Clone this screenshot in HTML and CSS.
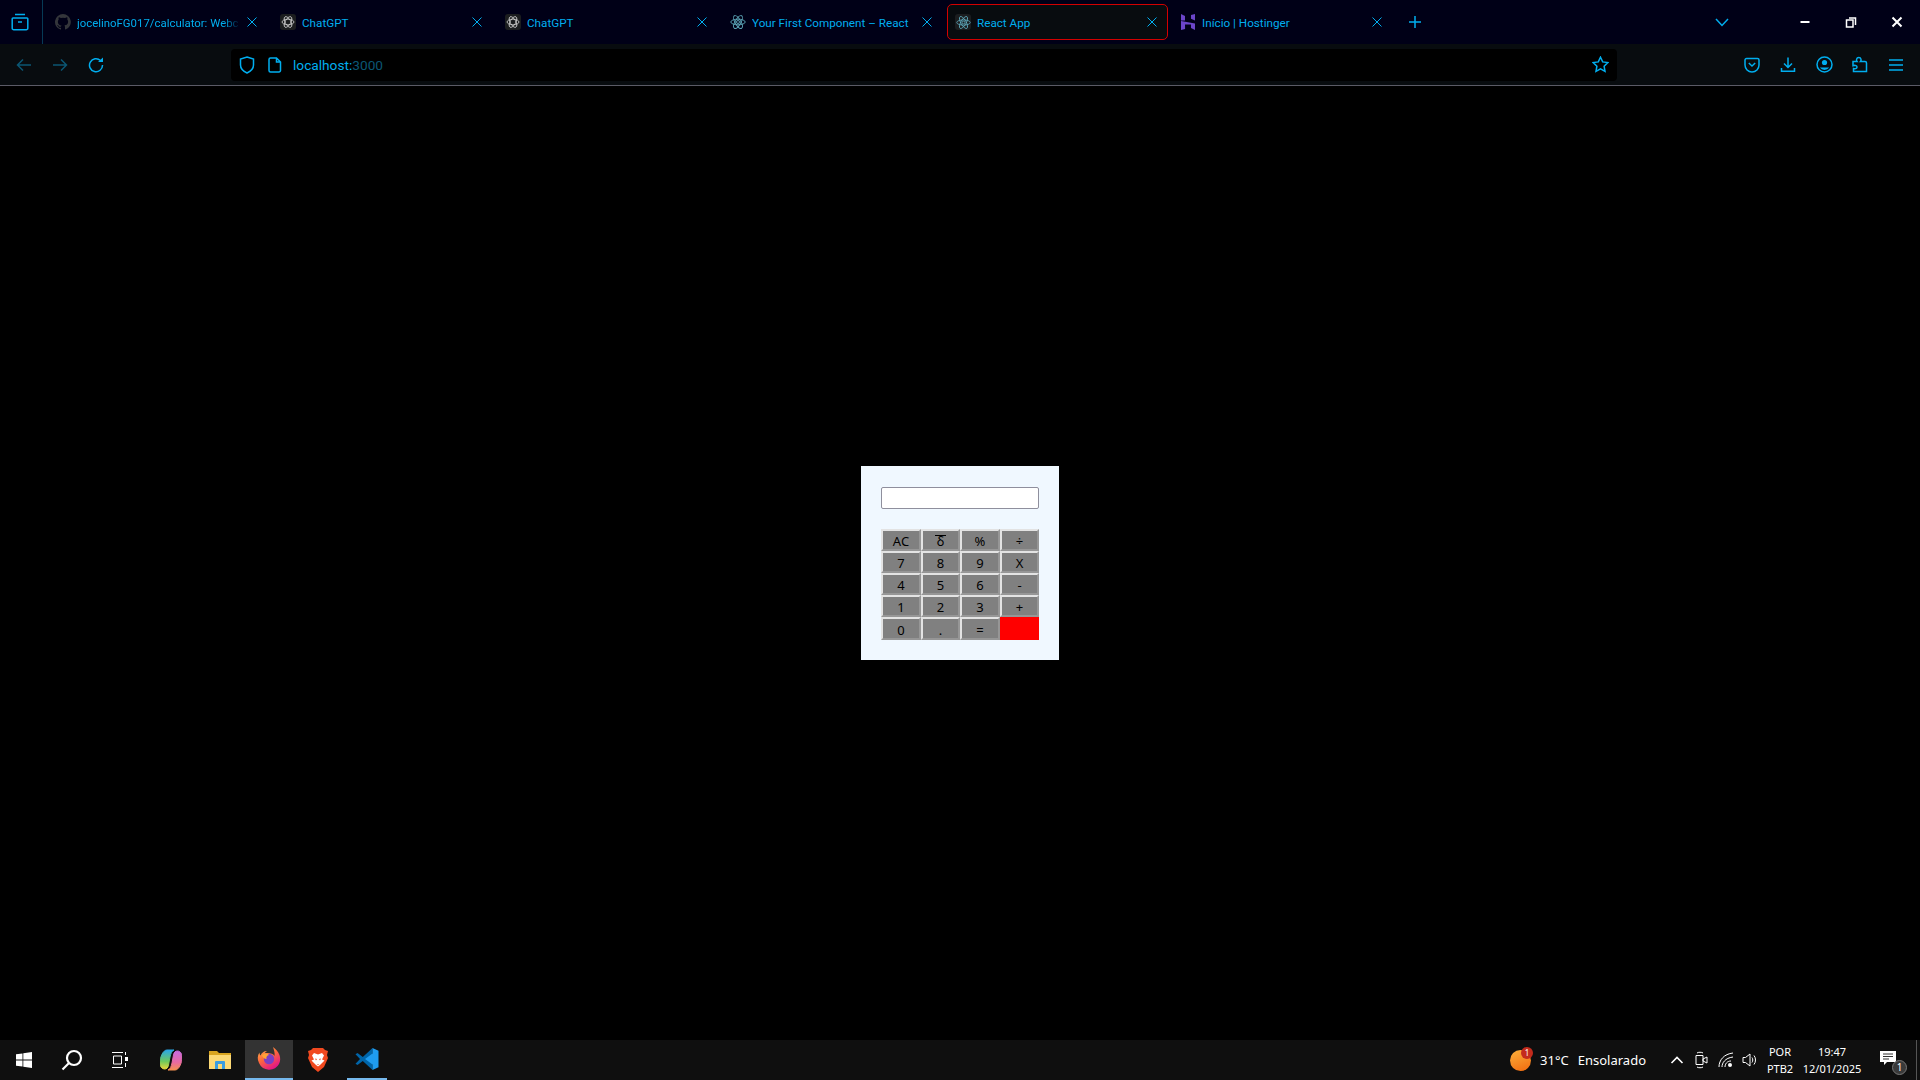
FILE: index.html
```html
<!DOCTYPE html>
<html lang="en">
<head>
    <meta charset="UTF-8">
    <meta name="viewport" content="width=device-width, initial-scale=1.0">
    <title>React App</title>
    <link rel="stylesheet" href="styles.css">
</head>
<body>
    <svg class="defs" width="0" height="0">
        <defs>
            <symbol id="ico-close" viewBox="0 0 12 12"><path d="M1.5 1.5l9 9M10.5 1.5l-9 9"/></symbol>
            <symbol id="ico-react" viewBox="0 0 16 16">
                <ellipse cx="8" cy="8" rx="7.2" ry="2.8"/>
                <ellipse cx="8" cy="8" rx="7.2" ry="2.8" transform="rotate(60 8 8)"/>
                <ellipse cx="8" cy="8" rx="7.2" ry="2.8" transform="rotate(120 8 8)"/>
                <circle class="dot" cx="8" cy="8" r="1.5"/>
            </symbol>
            <symbol id="ico-gpt" viewBox="0 0 16 16">
                <ellipse cx="8" cy="8" rx="6.8" ry="3.2"/>
                <ellipse cx="8" cy="8" rx="6.8" ry="3.2" transform="rotate(60 8 8)"/>
                <ellipse cx="8" cy="8" rx="6.8" ry="3.2" transform="rotate(120 8 8)"/>
            </symbol>
        </defs>
    </svg>

    <!-- Tab strip -->
    <header class="tabbar">
        <div class="tabbar-menu">
            <svg class="icon" width="18" height="18" viewBox="0 0 18 18"><path d="M4 1.5h10M2 5h14a.8.8 0 0 1 .8.8v9.4a1.6 1.6 0 0 1-1.6 1.6H2.8a1.6 1.6 0 0 1-1.6-1.6V5.8A.8.8 0 0 1 2 5zM7 9h4"/></svg>
        </div>
        <div class="tabs">
            <div class="tab">
                <svg class="favicon" width="16" height="16" viewBox="0 0 16 16"><path class="gh" d="M8 0a8 8 0 0 0-2.5 15.6c.4.1.5-.2.5-.4v-1.4c-2.2.5-2.7-1-2.7-1-.4-.9-.9-1.200-.9-1.200-.7-.5.1-.5.1-.5.8.1 1.200.8 1.200.8.7 1.200 1.900.9 2.300.7.1-.5.3-.9.5-1.100-1.800-.2-3.600-.9-3.600-4 0-.9.3-1.600.8-2.100-.1-.2-.4-1 .1-2.100 0 0 .7-.2 2.200.8a7.500 7.500 0 0 1 4 0c1.500-1 2.200-.8 2.200-.8.4 1.100.2 1.900.1 2.100.5.6.8 1.300.8 2.100 0 3.100-1.900 3.700-3.700 3.900.3.3.6.800.6 1.500v2.200c0 .2.1.5.6.4A8 8 0 0 0 8 0z"/></svg>
                <span class="tab-title tab-title-long">jocelinoFG017/calculator: Webc</span>
                <svg class="tab-close"><use href="#ico-close"/></svg>
            </div>
            <div class="tab">
                <span class="favicon-box"><svg class="gpt" width="14" height="14"><use href="#ico-gpt"/></svg></span>
                <span class="tab-title">ChatGPT</span>
                <svg class="tab-close"><use href="#ico-close"/></svg>
            </div>
            <div class="tab">
                <span class="favicon-box"><svg class="gpt" width="14" height="14"><use href="#ico-gpt"/></svg></span>
                <span class="tab-title">ChatGPT</span>
                <svg class="tab-close"><use href="#ico-close"/></svg>
            </div>
            <div class="tab">
                <svg class="favicon react" width="16" height="16"><use href="#ico-react"/></svg>
                <span class="tab-title">Your First Component – React</span>
                <svg class="tab-close"><use href="#ico-close"/></svg>
            </div>
            <div class="tab tab-active">
                <span class="favicon-box"><svg class="react" width="15" height="15"><use href="#ico-react"/></svg></span>
                <span class="tab-title">React App</span>
                <svg class="tab-close"><use href="#ico-close"/></svg>
            </div>
            <div class="tab">
                <svg class="favicon" width="16" height="16" viewBox="0 0 16 16"><path class="hostinger" d="M1 0l4 2v4.500l-4-.1zM11 1l4-1v6.500l-4-1.800zM1 7l14 2.500V16l-4-2v-3.500H5l.1 4.500-4.100 1z"/></svg>
                <span class="tab-title">Início | Hostinger</span>
                <svg class="tab-close"><use href="#ico-close"/></svg>
            </div>
        </div>
        <svg class="icon new-tab" width="14" height="14" viewBox="0 0 14 14"><path d="M7 1v12M1 7h12"/></svg>
        <svg class="icon tab-list" width="14" height="14" viewBox="0 0 14 14"><path d="M1 4l6 6.500L13 4"/></svg>
        <div class="win-controls">
            <span class="win-btn"><svg width="12" height="12" viewBox="0 0 12 12"><path d="M1.500 6h9" stroke-width="2"/></svg></span>
            <span class="win-btn"><svg width="12" height="12" viewBox="0 0 12 12"><path d="M1.500 4h6.500v7H1.500zM4 2h6.500v7" stroke-width="1.500"/></svg></span>
            <span class="win-btn"><svg width="12" height="12" viewBox="0 0 12 12"><path d="M1.500 1.500l9 9M10.500 1.500l-9 9" stroke-width="2"/></svg></span>
        </div>
    </header>

    <!-- Navigation toolbar -->
    <nav class="toolbar">
        <span class="tool-btn"><svg class="icon dim" width="16" height="16" viewBox="0 0 16 16"><path d="M15 8H1.500M7 2.500L1.500 8 7 13.500"/></svg></span>
        <span class="tool-btn"><svg class="icon dim" width="16" height="16" viewBox="0 0 16 16"><path d="M1 8h13.500M9 2.500L14.500 8 9 13.500"/></svg></span>
        <span class="tool-btn"><svg class="icon" width="16" height="16" viewBox="0 0 16 16"><path d="M12.500 3.500A6.500 6.500 0 1 0 14.500 8"/><path class="solid" d="M10 5h5V.5z"/></svg></span>
        <div class="urlbar">
            <svg class="icon" width="16" height="18" viewBox="0 0 16 18"><path d="M8 1l6.500 2v6c0 3.500-2.500 6.200-6.500 8-4-1.800-6.500-4.500-6.500-8V3z"/></svg>
            <svg class="icon" width="14" height="16" viewBox="0 0 14 16"><path d="M2.500 1h6l4 4v8.500a1.500 1.500 0 0 1-1.500 1.500H2.500A1.500 1.500 0 0 1 1 13.500v-11A1.500 1.500 0 0 1 2.500 1zM8.500 1v4h4"/></svg>
            <span class="url">localhost:<span class="url-port">3000</span></span>
            <svg class="icon star" width="17" height="17" viewBox="0 0 17 17"><path d="M8.500 1.200l2.200 4.700 5.100.7-3.700 3.600.9 5.100-4.500-2.500L4 15.300l.9-5.100L1.200 6.600l5.100-.7z"/></svg>
        </div>
        <div class="toolbar-actions">
            <span class="tool-btn"><svg class="icon" width="16" height="16" viewBox="0 0 16 16"><path d="M2.500 1.500h11A1.500 1.500 0 0 1 15 3v5a7 7 0 0 1-14 0V3a1.500 1.500 0 0 1 1.500-1.500zM4.800 6L8 9l3.200-3"/></svg></span>
            <span class="tool-btn"><svg class="icon" width="16" height="16" viewBox="0 0 16 16"><path d="M8 .5V10M4 6.500L8 10.500l4-4M1.500 11v3.200h13V11"/></svg></span>
            <span class="tool-btn"><svg class="icon" width="17" height="17" viewBox="0 0 17 17"><circle cx="8.500" cy="8.500" r="7.500"/><circle class="solid" cx="8.500" cy="6.500" r="2.600"/><path class="solid" d="M3.800 11.500h9.400a5.800 5.800 0 0 1-9.400 0z"/></svg></span>
            <span class="tool-btn"><svg class="icon" width="16" height="17" viewBox="0 0 16 17"><path d="M1 5.500h4c-.8-1-.8-4 1.800-4s2.600 3 1.700 4H13a1.500 1.500 0 0 1 1.500 1.500v8.500H1.500v-3c2.500.8 3.500-.5 3.500-1.500S3.500 8.800 1 9.700z"/></svg></span>
            <span class="tool-btn"><svg class="icon" width="16" height="14" viewBox="0 0 16 14"><path d="M1 2h14M1 7h14M1 12h14"/></svg></span>
        </div>
    </nav>

    <!-- Calculator page -->
    <main class="page">
        <div class="calculator">
            <input class="display" type="text">
            <div class="keys">
                <button>AC</button>
                <button><span class="overbar">δ</span></button>
                <button>%</button>
                <button>÷</button>
                <button>7</button>
                <button>8</button>
                <button>9</button>
                <button>X</button>
                <button>4</button>
                <button>5</button>
                <button>6</button>
                <button>-</button>
                <button>1</button>
                <button>2</button>
                <button>3</button>
                <button>+</button>
                <button>0</button>
                <button>.</button>
                <button>=</button>
                <button class="key-red"></button>
            </div>
        </div>
    </main>

    <!-- Windows taskbar -->
    <footer class="taskbar">
        <div class="task-slot start">
            <svg width="16" height="16" viewBox="0 0 16 16"><path class="white" d="M0 2.300l6.500-.9v6.200H0zM7.300 1.300L16 0v7.600H7.300zM0 8.400h6.500v6.200L0 13.700zM7.300 8.400H16V16l-8.700-1.300z"/></svg>
        </div>
        <div class="task-slot search">
            <svg width="22" height="22" viewBox="0 0 22 22"><circle class="line" cx="13" cy="9" r="7"/><path class="line" d="M8 14l-6.500 6.500"/></svg>
        </div>
        <div class="task-slot taskview">
            <svg width="17" height="16" viewBox="0 0 17 16"><path class="thin" d="M0 .5h11M0 15.500h11M1.500 4h8v8h-8z"/><path class="white" d="M13 5h3v4h-3zM13 0h1v3h-1zM13 11h1v4h-1z"/></svg>
        </div>
        <div class="task-slot copilot">
            <svg width="22" height="22" viewBox="0 0 22 22">
                <defs>
                    <linearGradient id="cp1" x1="0" y1="0" x2="0" y2="1"><stop offset="0" stop-color="#2aa7e8"/><stop offset=".6" stop-color="#6ec95c"/><stop offset="1" stop-color="#e8d53c"/></linearGradient>
                    <linearGradient id="cp2" x1="0" y1="0" x2="0" y2="1"><stop offset="0" stop-color="#c86be0"/><stop offset=".6" stop-color="#e86aa0"/><stop offset="1" stop-color="#f59050"/></linearGradient>
                </defs>
                <path fill="url(#cp1)" stroke="url(#cp1)" d="M7 1h7c-2.500 1-3 3-4 7l-1.500 8c-.5 3-2 4-4 4-3 0-4.500-3-4.500-6 0-6 3-13 7-13z"/>
                <path fill="url(#cp2)" stroke="url(#cp2)" d="M15 21H8c2.500-1 3-3 4-7l1.500-8c.5-3 2-4 4-4 3 0 4.500 3 4.500 6 0 6-3 13-7 13z"/>
            </svg>
        </div>
        <div class="task-slot folder">
            <svg width="22" height="20" viewBox="0 0 22 20"><path fill="#d9a520" d="M0 1h8l2 2h12v15H0z"/><path fill="#fcd975" d="M0 5h22v14H0z"/><path fill="#3a9de0" d="M6 19v-7a1 1 0 0 1 1-1h8a1 1 0 0 1 1 1v7h-3v-5H9v5z"/></svg>
        </div>
        <div class="task-slot firefox task-active">
            <svg width="24" height="24" viewBox="0 0 24 24">
                <defs>
                    <linearGradient id="ff1" x1="0" y1="0" x2=".6" y2="1"><stop offset="0" stop-color="#ffbd4f"/><stop offset=".5" stop-color="#ff6a3a"/><stop offset="1" stop-color="#e31587"/></linearGradient>
                </defs>
                <path fill="url(#ff1)" d="M16 0c3 2.500 5 4 6.500 8 1 3 1 6-.5 9a11.200 11.200 0 0 1-20-1C0 12 .5 8.500 2.500 5.500c0 1.500.5 2.500 1 3C5 5 8 3.500 10 4c-1 .5-1.500 1-2 2 4 0 8 0 9.500 3 .500-3-.5-6-1.500-9z"/>
                <circle fill="#7b3fc4" cx="12" cy="12" r="5.200"/>
                <path fill="#ffa436" d="M5 8c3-2 6-1.500 7 0-2 .5-3 2-2.500 4-2 0-4-1.500-4.500-4z"/>
            </svg>
        </div>
        <div class="task-slot brave">
            <svg width="20" height="24" viewBox="0 0 20 24"><path fill="#f1491f" d="M5 0h10l2 2 3 1-1 4 1 3-4 9-6 5-6-5-4-9 1-3-1-4 3-1z"/><path fill="#fff" d="M6 5l4 1.500L14 5l2 2.500-2 4 2.500 1L12 17l-2 1.500L8 17l-4.500-4.500 2.500-1-2-4z"/><path fill="#f1491f" d="M7 10.500l2 .5-1 1.500zM13 10.500l-2 .5 1 1.500zM9 16h2l-1 1z"/></svg>
        </div>
        <div class="task-slot vscode">
            <svg width="24" height="24" viewBox="0 0 24 24"><path fill="#0065a9" d="M17.500 1L7.800 10 2.500 6 .5 7.200 5 12 .5 16.800l2 1.200 5.300-4 9.700 9z"/><path fill="#1f9cf0" d="M17.500 1l6 2.800v16.400l-6 2.800zM17.500 6.500L10 12l7.500 5.500z" fill-rule="evenodd"/></svg>
        </div>

        <div class="tray">
            <div class="weather">
                <span class="weather-sun"><span class="weather-badge">1</span></span>
                <span class="weather-temp">31°C</span>
                <span>Ensolarado</span>
            </div>
            <svg class="tray-icon chevron" width="14" height="14" viewBox="0 0 14 14"><path class="line" d="M1.500 10L7 4.500 12.500 10"/></svg>
            <svg class="tray-icon meet" width="14" height="18" viewBox="0 0 14 18"><path class="thin" d="M2 4.500h7v9H2zM9 8l4-2v6l-4-2zM3 2c1-1 5-1 6 0M3 16c1 1 5 1 6 0"/></svg>
            <svg class="tray-icon wifi" width="16" height="16" viewBox="0 0 16 16"><path class="thin" d="M1 15C1 8 6 2 15 1M4 15c0-4 3-9 11-10M7 15c0-3 2-6 6-6"/><circle class="white" cx="12" cy="13" r="2"/></svg>
            <svg class="tray-icon volume" width="16" height="16" viewBox="0 0 16 16"><path class="thin" d="M1 5.500h2.500L8 2v12l-4.500-3.500H1zM10 5.500c1 1.500 1 3.500 0 5M12 3.500c2 2.500 2 6.500 0 9"/></svg>
            <div class="tray-lang"><span>POR</span><span>PTB2</span></div>
            <div class="tray-clock"><span>19:47</span><span>12/01/2025</span></div>
            <div class="tray-notify">
                <svg width="16" height="14" viewBox="0 0 16 14"><path class="white" d="M0 0h16v11H7l-3 3v-3H0z"/><path class="dark-line" d="M3 3h10M3 5.500h10M3 8h6"/></svg>
                <span class="notify-count">1</span>
            </div>
            <div class="show-desktop"></div>
        </div>
    </footer>
</body>
</html>
```

FILE: styles.css
```css
* {
    box-sizing: border-box;
}

html, body {
    height: 100%;
}

body {
    margin: 0;
    display: flex;
    flex-direction: column;
    overflow: hidden;
    background-color: #000;
    font-family: "Noto Sans", "Open Sans", sans-serif;
}

.defs {
    position: absolute;
}

/* Shared line icon */
.icon {
    flex: none;
    fill: none;
    stroke: #00aeef;
    stroke-width: 1.5;
}

.icon.dim {
    stroke: #0b5673;
}

.icon .solid {
    fill: #00aeef;
    stroke: none;
}

/* Tab strip */
.tabbar {
    flex: none;
    height: 44px;
    display: flex;
    align-items: center;
    background-color: #000017;
}

.tabbar-menu {
    flex: none;
    width: 43px;
    height: 100%;
    display: flex;
    align-items: center;
    justify-content: center;
    padding-right: 3px;
    border-right: 1px solid #063a55;
}

.tabs {
    display: flex;
    gap: 4px;
    margin-left: 4px;
}

.tab {
    width: 221px;
    height: 36px;
    display: flex;
    align-items: center;
    gap: 6px;
    padding: 0 9px 0 7px;
    border: 1px solid transparent;
    border-radius: 5px;
    font-family: Roboto, "Noto Sans", sans-serif;
    font-size: 11.7px;
    color: #00aeef;
}

.tab-active {
    background-color: #080c0f;
    border-color: #d40000;
}

.tab-title {
    flex: 1;
    min-width: 0;
    padding-top: 1px;
    overflow: hidden;
    white-space: nowrap;
}

.tab-title-long {
    font-size: 11.4px;
    -webkit-mask-image: linear-gradient(to right, #000 90%, transparent);
    mask-image: linear-gradient(to right, #000 90%, transparent);
}

.tab-close {
    flex: none;
    width: 12px;
    height: 12px;
    fill: none;
    stroke: #00aeef;
    stroke-width: 1;
}

.favicon {
    flex: none;
}

.favicon-box {
    flex: none;
    width: 16px;
    height: 16px;
    display: flex;
    align-items: center;
    justify-content: center;
    background-color: #1b1d1f;
    border-radius: 3px;
}

.gh {
    fill: #34363b;
}

.hostinger {
    fill: #6b45c9;
}

.gpt {
    fill: none;
    stroke: #d6d6d6;
    stroke-width: 0.9;
}

.react {
    fill: none;
    stroke: #5ea9bb;
    stroke-width: 0.9;
}

.new-tab {
    margin-left: 15px;
}

.tab-list {
    margin-left: auto;
    margin-right: 53px;
}

.win-controls {
    display: flex;
    height: 100%;
}

.win-btn {
    width: 46px;
    display: flex;
    align-items: center;
    justify-content: center;
}

.win-btn svg {
    fill: none;
    stroke: #fff;
}

/* Toolbar */
.toolbar {
    flex: none;
    height: 42px;
    display: flex;
    align-items: center;
    padding: 0 6px;
    background-color: #080c0f;
    border-bottom: 1px solid #5b5b66;
}

.tool-btn {
    flex: none;
    width: 36px;
    display: flex;
    align-items: center;
    justify-content: center;
}

.urlbar {
    width: 1386px;
    height: 32px;
    margin: 0 117px;
    display: flex;
    align-items: center;
    gap: 13px;
    padding: 0 8px;
    background-color: #000;
    border-radius: 4px;
    font-family: Roboto, "Noto Sans", sans-serif;
    font-size: 13.7px;
    color: #00aeef;
}

.url {
    flex: 1;
    margin-left: -2px;
}

.url-port {
    color: #0b5673;
}

.toolbar-actions {
    display: flex;
}

/* Calculator */
.page {
    flex: 1;
    display: flex;
    align-items: center;
    justify-content: center;
    background-color: #000;
}

.calculator {
    width: 198px;
    height: 194px;
    display: flex;
    flex-direction: column;
    gap: 20px;
    padding: 21px 20px 20px;
    background-color: #f0f8ff;
}

.display {
    width: 158px;
    height: 22px;
    padding: 0;
    background-color: #fff;
    border: 1px solid #8f8f9d;
    border-radius: 2px;
}

.keys {
    display: grid;
    grid-template-columns: 40px 39px 40px 39px;
    grid-template-rows: repeat(4, 22px) 23px;
}

.keys button {
    margin: 0;
    padding: 3px 0 0;
    background-color: #808080;
    border: 2px solid;
    border-color: #e3e3e3 #969696 #969696 #e3e3e3;
    font-family: "Noto Sans", "Open Sans", sans-serif;
    font-size: 13px;
    line-height: 1;
    color: #000;
}

.keys .key-red {
    background-color: #f00;
    border: 0;
}

.overbar {
    display: inline-block;
    padding: 0 2px;
    border-top: 1px solid #000;
    line-height: 10px;
}

/* Taskbar */
.taskbar {
    flex: none;
    height: 40px;
    display: flex;
    background-color: #0f0f0f;
    color: #fff;
}

.task-slot {
    flex: none;
    height: 100%;
    display: flex;
    align-items: center;
    justify-content: center;
}

.start { width: 48px; }
.search { width: 48px; }
.taskview { width: 48px; }
.copilot { width: 49px; margin-left: 2px; }
.folder { width: 49px; }
.firefox { width: 48px; margin-left: 1px; }
.brave { width: 48px; margin-left: 1px; }
.vscode { width: 40px; margin-left: 5px; border-bottom: 2px solid #76b9ed; }

.task-active {
    background-color: #333;
    border-bottom: 2px solid #76b9ed;
}

.white {
    fill: #fff;
}

.line {
    fill: none;
    stroke: #fff;
    stroke-width: 1.6;
}

.search .line {
    stroke-width: 2.2;
}

.thin {
    fill: none;
    stroke: #fff;
    stroke-width: 1;
}

.dark-line {
    fill: none;
    stroke: #333;
    stroke-width: 1;
}

.tray {
    margin-left: auto;
    display: flex;
    align-items: center;
    font-size: 13px;
}

.weather {
    display: flex;
    align-items: center;
    gap: 8px;
    margin-right: 24px;
}

.weather-temp {
    margin-right: 1px;
}

.weather-sun {
    position: relative;
    width: 21px;
    height: 21px;
    margin-right: 1px;
    border-radius: 50%;
    background: linear-gradient(160deg, #fbb03b, #f26a0f);
}

.weather-badge {
    position: absolute;
    top: -3px;
    right: -2px;
    width: 12px;
    height: 12px;
    border-radius: 50%;
    background-color: #c42b1c;
    font-size: 8px;
    line-height: 12px;
    text-align: center;
}

.tray-icon {
    flex: none;
}

.chevron { margin-right: 10px; }
.meet { margin-right: 10px; }
.wifi { margin-right: 8px; }
.volume { margin-right: 7px; }

.tray-lang,
.tray-clock {
    display: flex;
    flex-direction: column;
    align-items: center;
    font-size: 11px;
    line-height: 17px;
}

.tray-lang {
    width: 30px;
    margin-right: 6px;
}

.tray-clock {
    width: 62px;
    margin-right: 17px;
}

.tray-notify {
    position: relative;
    width: 24px;
    height: 24px;
    padding-top: 3px;
}

.notify-count {
    position: absolute;
    right: -3px;
    bottom: -3px;
    width: 15px;
    height: 15px;
    border-radius: 50%;
    background-color: #3a3a3a;
    border: 1px solid #777;
    font-size: 10px;
    line-height: 13px;
    text-align: center;
}

.show-desktop {
    width: 1px;
    height: 100%;
    margin-left: 12px;
    margin-right: 3px;
    background-color: #555;
}
```
